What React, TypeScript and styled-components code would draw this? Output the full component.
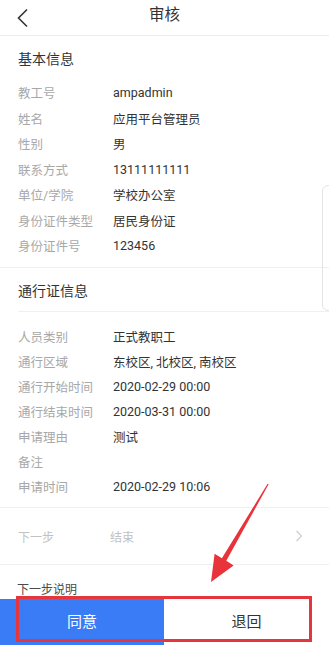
import React from "react";
import styled, { createGlobalStyle } from "styled-components";

const Global = createGlobalStyle`
  html, body { margin: 0; padding: 0; background: #fff; }
  body {
    font-family: Roboto, "Noto Sans CJK SC", "Noto Sans", sans-serif;
    -webkit-font-smoothing: antialiased;
  }
  * { box-sizing: border-box; }
`;

const Page = styled.div`
  position: relative;
  width: 329px;
  height: 645px;
  overflow: hidden;
  display: flex;
  flex-direction: column;
  background: #fff;
`;

const Header = styled.header`
  height: 36px;
  flex: none;
  display: grid;
  grid-template-columns: 48px 1fr 48px;
  align-items: center;
  border-bottom: 1px solid #ececec;
`;

const BackButton = styled.div`
  display: flex;
  align-items: center;
  padding-left: 16px;
  height: 100%;
`;

const Title = styled.h1`
  margin: 0;
  text-align: center;
  font-size: 15.5px;
  font-weight: 400;
  color: #333;
  line-height: 1;
  padding-bottom: 4px;
`;

const Content = styled.main`
  flex: 1;
  overflow: hidden;
`;

const Section = styled.section`
  border-bottom: 1px solid #efefef;
`;

const SectionTitle = styled.div<{ $h: number; $divider?: boolean }>`
  height: ${(p) => p.$h}px;
  margin-left: 18px;
  display: flex;
  align-items: center;
  font-size: 14px;
  color: #333;
  border-bottom: ${(p) => (p.$divider ? "1px solid #f0f0f0" : "none")};
`;

const List = styled.div<{ $top: number; $bottom: number }>`
  padding: ${(p) => p.$top}px 18px ${(p) => p.$bottom}px;
`;

const Row = styled.div<{ $pitch: number }>`
  height: ${(p) => p.$pitch}px;
  display: grid;
  grid-template-columns: 95px 1fr;
  align-items: center;
  font-size: 12.5px;
`;

const Label = styled.span`
  color: #a8a8a8;
  white-space: nowrap;
`;

const Value = styled.span`
  color: #333;
  white-space: nowrap;
`;

const NextRow = styled.div`
  height: 57px;
  display: grid;
  grid-template-columns: 92px 1fr 20px;
  align-items: center;
  padding: 0 14px 0 18px;
  font-size: 12px;
  color: #c2c2c2;
  border-bottom: 1px solid #efefef;
`;

const NoteRow = styled.div`
  height: 46px;
  display: flex;
  align-items: center;
  padding-left: 17px;
  font-size: 12px;
  color: #4a4a4a;
`;

const Footer = styled.footer`
  flex: none;
  height: 46px;
  display: grid;
  grid-template-columns: 164px 1fr;
`;

const ActionButton = styled.button<{ $primary?: boolean }>`
  border: none;
  margin: 0;
  padding: 0 0 4px;
  font-family: inherit;
  font-size: 15px;
  background: ${(p) => (p.$primary ? "#3a7cf6" : "#fff")};
  color: ${(p) => (p.$primary ? "#fff" : "#333")};
  display: flex;
  align-items: center;
  justify-content: center;
`;

const ScrollHint = styled.div`
  position: absolute;
  top: 185px;
  left: 322px;
  width: 20px;
  height: 126px;
  border: 1px solid #e4e4e4;
  border-radius: 6px;
  pointer-events: none;
`;

const RedBox = styled.div`
  position: absolute;
  left: 16px;
  top: 596px;
  width: 296px;
  height: 46px;
  border: 3px solid #e6363d;
  pointer-events: none;
`;

const Overlay = styled.svg`
  position: absolute;
  left: 0;
  top: 0;
  pointer-events: none;
`;

type Item = [string, string];

const basic: Item[] = [
  ["教工号", "ampadmin"],
  ["姓名", "应用平台管理员"],
  ["性别", "男"],
  ["联系方式", "13111111111"],
  ["单位/学院", "学校办公室"],
  ["身份证件类型", "居民身份证"],
  ["身份证件号", "123456"],
];

const pass: Item[] = [
  ["人员类别", "正式教职工"],
  ["通行区域", "东校区, 北校区, 南校区"],
  ["通行开始时间", "2020-02-29 00:00"],
  ["通行结束时间", "2020-03-31 00:00"],
  ["申请理由", "测试"],
  ["备注", ""],
  ["申请时间", "2020-02-29 10:06"],
];

function Rows({ items, pitch }: { items: Item[]; pitch: number }) {
  return (
    <>
      {items.map(([l, v]) => (
        <Row key={l} $pitch={pitch}>
          <Label>{l}</Label>
          <Value>{v}</Value>
        </Row>
      ))}
    </>
  );
}

export default function App() {
  return (
    <>
      <Global />
      <Page>
        <Header>
          <BackButton>
            <svg width="14" height="20" viewBox="0 0 14 20">
              <path d="M11 1.5 L2.5 10 L11 18.5" fill="none" stroke="#333" strokeWidth="1.6" />
            </svg>
          </BackButton>
          <Title>审核</Title>
          <span />
        </Header>
        <Content>
          <Section>
            <SectionTitle $h={44}>基本信息</SectionTitle>
            <List $top={0} $bottom={8.5}>
              <Rows items={basic} pitch={25.5} />
            </List>
          </Section>
          <Section>
            <SectionTitle $h={44} $divider>通行证信息</SectionTitle>
            <List $top={11.5} $bottom={8.5}>
              <Rows items={pass} pitch={25} />
            </List>
          </Section>
          <NextRow>
            <span>下一步</span>
            <span>结束</span>
            <svg width="8" height="12" viewBox="0 0 8 12">
              <path d="M1.5 1 L6.5 6 L1.5 11" fill="none" stroke="#cfcfcf" strokeWidth="1.3" />
            </svg>
          </NextRow>
          <NoteRow>下一步说明</NoteRow>
        </Content>
        <Footer>
          <ActionButton $primary>同意</ActionButton>
          <ActionButton>退回</ActionButton>
        </Footer>
        <ScrollHint />
        <RedBox />
        <Overlay width="329" height="645" viewBox="0 0 329 645">
          <polygon
            points="267.6,483.8 268.6,484.3 226.3,560.8 233.6,565.5 211,582 214.6,553.8 221.9,558.2"
            fill="#e8333a"
          />
        </Overlay>
      </Page>
    </>
  );
}
